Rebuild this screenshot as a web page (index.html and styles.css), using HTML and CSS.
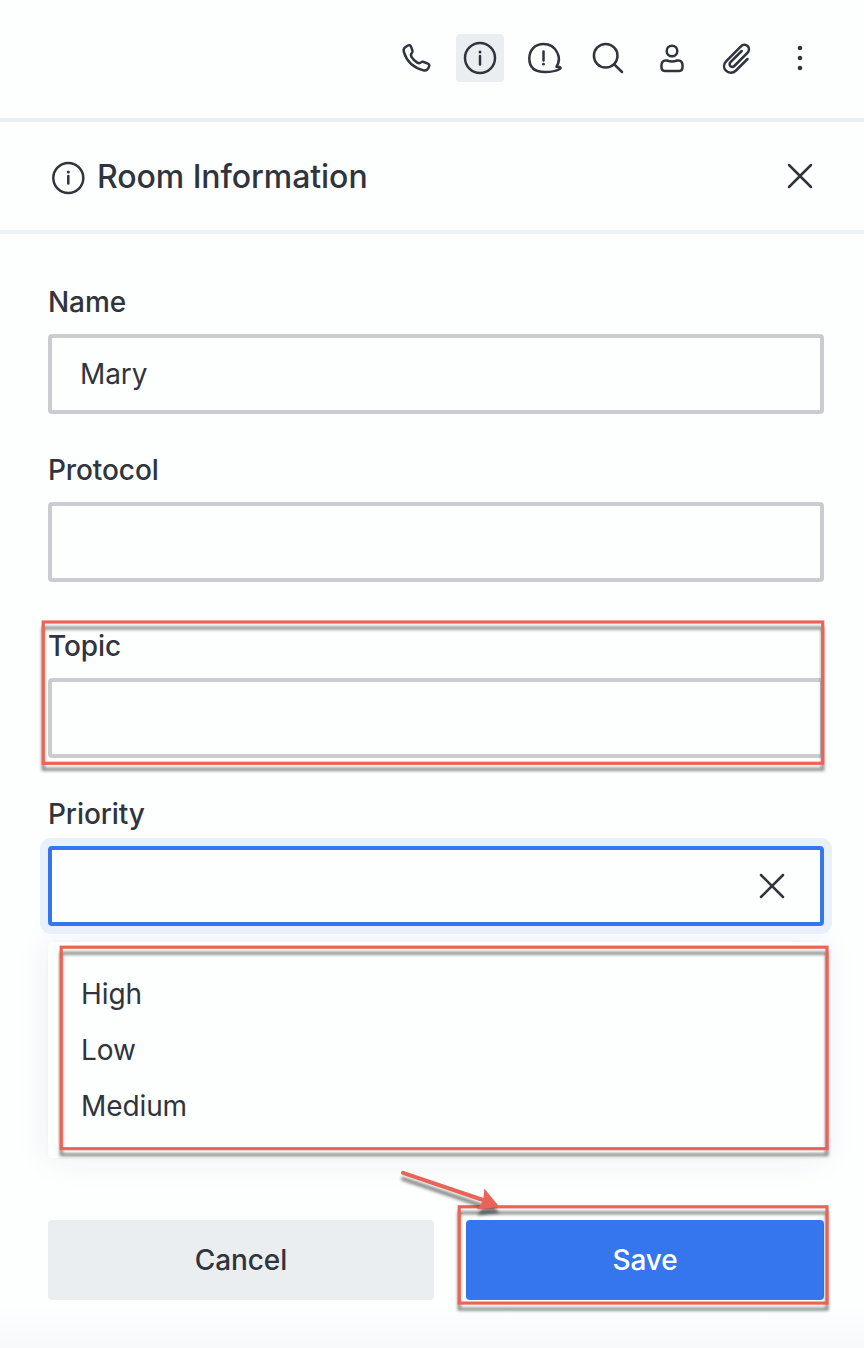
FILE: index.html
```html
<!DOCTYPE html>
<html lang="en">
<head>
<meta charset="utf-8">
<title>Room Information</title>
<link rel="stylesheet" href="styles.css">
</head>
<body>
<main class="panel">
  <nav class="toolbar">
    <button class="tool" aria-label="Call"><svg class="icon" viewBox="0 0 48 48"><path d="M13.200 13.200l2.700-1.700c1.200-.700 2.500-.300 3 .900l1.500 4.100c.4 1.100.2 1.900-.6 2.700-1.200 1.200-1.300 2-.3 3.600 1.500 2.500 3.400 4.300 5.800 5.800 1.500.900 2.500.800 3.700-.200.900-.800 1.700-.900 2.800-.400l4.100 1.700c1.200.500 1.700 1.500 1.200 2.700-1 2.900-2.900 4.700-5.700 4C21.500 33.600 14.500 26.800 12 18.400c-.700-2.300-.400-4.100 1.200-5.200z"/></svg></button>
    <button class="tool tool-active" aria-label="Room information"><svg class="icon" viewBox="0 0 48 48"><circle cx="24" cy="24" r="15"/><path d="M24 22v8.500"/><circle class="dot" cx="24" cy="18" r="1.500"/></svg></button>
    <button class="tool" aria-label="Discussion"><svg class="icon" viewBox="0 0 48 48"><path d="M36.500 32.700c2.700-4.300 3-9.900.7-14.200C34.600 13 29.800 9.900 23.500 9.900 14.900 9.900 9.300 16 9.300 24.500 9.300 33.300 15 38 25 38c6.200 0 11-.900 14.800-3 1.200-.700 1-1.800-.3-2.100-1.200-.200-2.200-.200-3-.200z"/><path d="M23.500 17.500v9"/><circle class="dot" cx="23.500" cy="30.200" r="1.400"/></svg></button>
    <button class="tool" aria-label="Search"><svg class="icon" viewBox="0 0 48 48"><circle cx="21.700" cy="21.700" r="11.800"/><path d="M30.300 30.300l7.700 7.700"/></svg></button>
    <button class="tool" aria-label="Contact"><svg class="icon" viewBox="0 0 48 48"><circle cx="24" cy="17" r="5.300"/><path d="M17.700 26.500h1.300c3 1.100 7 1.100 10 0h1.300c3 0 4.300 2.100 4.300 5.500 0 3.500-.9 5-3.300 5H16.700c-2.400 0-3.300-1.500-3.300-5 0-3.400 1.300-5.500 4.300-5.500z"/></svg></button>
    <button class="tool" aria-label="Files"><svg class="icon" viewBox="0 0 48 48"><path d="M35.500 25L24 36.500c-3 3-7.300 3-10.100.200-2.600-2.700-2.400-6.600.4-9.500l14.600-14.900c1.900-1.900 4.800-2.200 6.700-.3 1.900 1.900 1.700 4.800-.2 6.800L22.300 32c-1.100 1.100-2.900 1.300-4 .2-1.100-1.100-.9-2.900.2-4L29.700 17"/></svg></button>
    <button class="tool" aria-label="More"><svg class="icon" viewBox="0 0 48 48"><circle class="dot" cx="24" cy="14" r="2.300"/><circle class="dot" cx="24" cy="24" r="2.300"/><circle class="dot" cx="24" cy="34" r="2.300"/></svg></button>
  </nav>
  <header class="header">
    <svg class="header-icon" viewBox="0 0 40 40"><circle cx="20.300" cy="20" r="15"/><path d="M20.300 18v7.500"/><circle class="dot" cx="20.300" cy="14" r="1.500"/></svg>
    <h1 class="title">Room Information</h1>
    <button class="close" aria-label="Close"><svg class="cross" viewBox="0 0 26 26"><path d="M2 2l22 22M24 2L2 24"/></svg></button>
  </header>
  <form class="form">
    <div class="field">
      <label class="label">Name</label>
      <div class="box">Mary</div>
    </div>
    <div class="field field-wide">
      <label class="label">Protocol</label>
      <div class="box"></div>
    </div>
    <div class="field">
      <label class="label">Topic</label>
      <div class="box"></div>
    </div>
    <div class="field field-priority">
      <label class="label">Priority</label>
      <div class="box box-focus"><svg class="cross" viewBox="0 0 26 26"><path d="M2 2l22 22M24 2L2 24"/></svg></div>
    </div>
    <ul class="options">
      <li class="option">High</li>
      <li class="option">Low</li>
      <li class="option">Medium</li>
    </ul>
    <div class="actions">
      <button class="action cancel" type="button">Cancel</button>
      <button class="action save" type="button">Save</button>
    </div>
  </form>
  <svg class="annotations" viewBox="0 0 864 1348">
    <g class="mark">
      <rect x="43.200" y="622" width="779.500" height="141.300"/>
      <rect x="61.200" y="947.200" width="765.800" height="201.500"/>
      <rect x="459.200" y="1206.800" width="367.800" height="96.300"/>
    </g>
    <g class="mark">
      <path class="shaft" d="M403 1172.800L486 1201"/>
      <path class="head" d="M499.500 1207L484.300 1188.500L483.500 1200.500L477 1209.500Z"/>
    </g>
  </svg>
</main>
</body>
</html>
```
FILE: styles.css
```css
* { box-sizing: border-box; }

body {
  margin: 0;
  background: #fdfefe;
  color: #2f343d;
  font-family: Inter, "Liberation Sans", sans-serif;
  font-size: 28px;
  letter-spacing: -.1px;
}

button {
  padding: 0;
  border: 0;
  background: none;
  color: inherit;
  font: inherit;
  letter-spacing: inherit;
}

.panel {
  position: relative;
  width: 864px;
  height: 1348px;
  overflow: hidden;
  background: linear-gradient(#fdfefe 0 1306px, #f8f9fb 1348px);
}

.toolbar {
  display: flex;
  justify-content: flex-end;
  gap: 16px;
  height: 122px;
  padding: 34px 40px 0 0;
  border-bottom: 4px solid #eceff0;
}

.tool {
  width: 48px;
  height: 48px;
  border-radius: 4px;
}

.tool-active { background: #ebeef0; }

.icon { display: block; width: 48px; height: 48px; }

.icon, .header-icon, .cross {
  fill: none;
  stroke: #2f343d;
  stroke-width: 2.500;
  stroke-linecap: round;
  stroke-linejoin: round;
}

.dot { fill: #2f343d; stroke: none; }

.header {
  display: flex;
  align-items: center;
  height: 112px;
  padding: 0 51px 0 48px;
  border-bottom: 4px solid #eff2f3;
}

.header-icon { width: 40px; height: 40px; margin-top: 4px; }

.title {
  flex: 1;
  margin: 2px 0 0 9px;
  font-size: 32px;
  font-weight: 500;
  letter-spacing: -.05px;
  line-height: 44px;
}

.close { display: flex; }

.cross { width: 26px; height: 26px; }

.form { padding: 48px 40px 0 48px; }

.field { height: 168px; }
.field-wide { height: 176px; }
.field-priority { height: 162px; }

.label {
  display: block;
  height: 52px;
  font-weight: 500;
  line-height: 41px;
}

.box {
  display: flex;
  align-items: center;
  height: 80px;
  padding: 0 28px;
  border: 4px solid #cbcccf;
  border-radius: 4px;
  background: #fdfefe;
}

.box-focus {
  justify-content: flex-end;
  padding-right: 35px;
  border-color: #3576ee;
  box-shadow: 0 0 0 8px #e8f0fc;
}

.options {
  height: 216px;
  margin: -14px 0 0;
  padding: 24px 33px;
  border-radius: 4px;
  background: #fdfefe;
  box-shadow: 0 0 4px rgba(47, 52, 61, .03), 0 0 36px rgba(47, 52, 80, .07);
  list-style: none;
}

.option { height: 56px; line-height: 57px; }

.field-priority { position: relative; }

.actions {
  display: flex;
  gap: 32px;
  margin-top: 62px;
}

.action {
  height: 80px;
  border-radius: 4px;
  font-weight: 500;
}

.cancel { width: 386px; background: #ebeef0; }
.save { width: 358px; background: #3576ee; color: #fff; }

.annotations {
  position: absolute;
  top: 0;
  left: 0;
  width: 864px;
  height: 1348px;
  pointer-events: none;
}

.mark {
  fill: none;
  stroke: #e96456;
  stroke-width: 3.200;
  filter: drop-shadow(0 6px 1.500px rgba(0, 0, 0, .45));
}

.shaft { stroke-width: 4; stroke-linecap: round; }
.head { fill: #e96456; stroke: none; }
```
